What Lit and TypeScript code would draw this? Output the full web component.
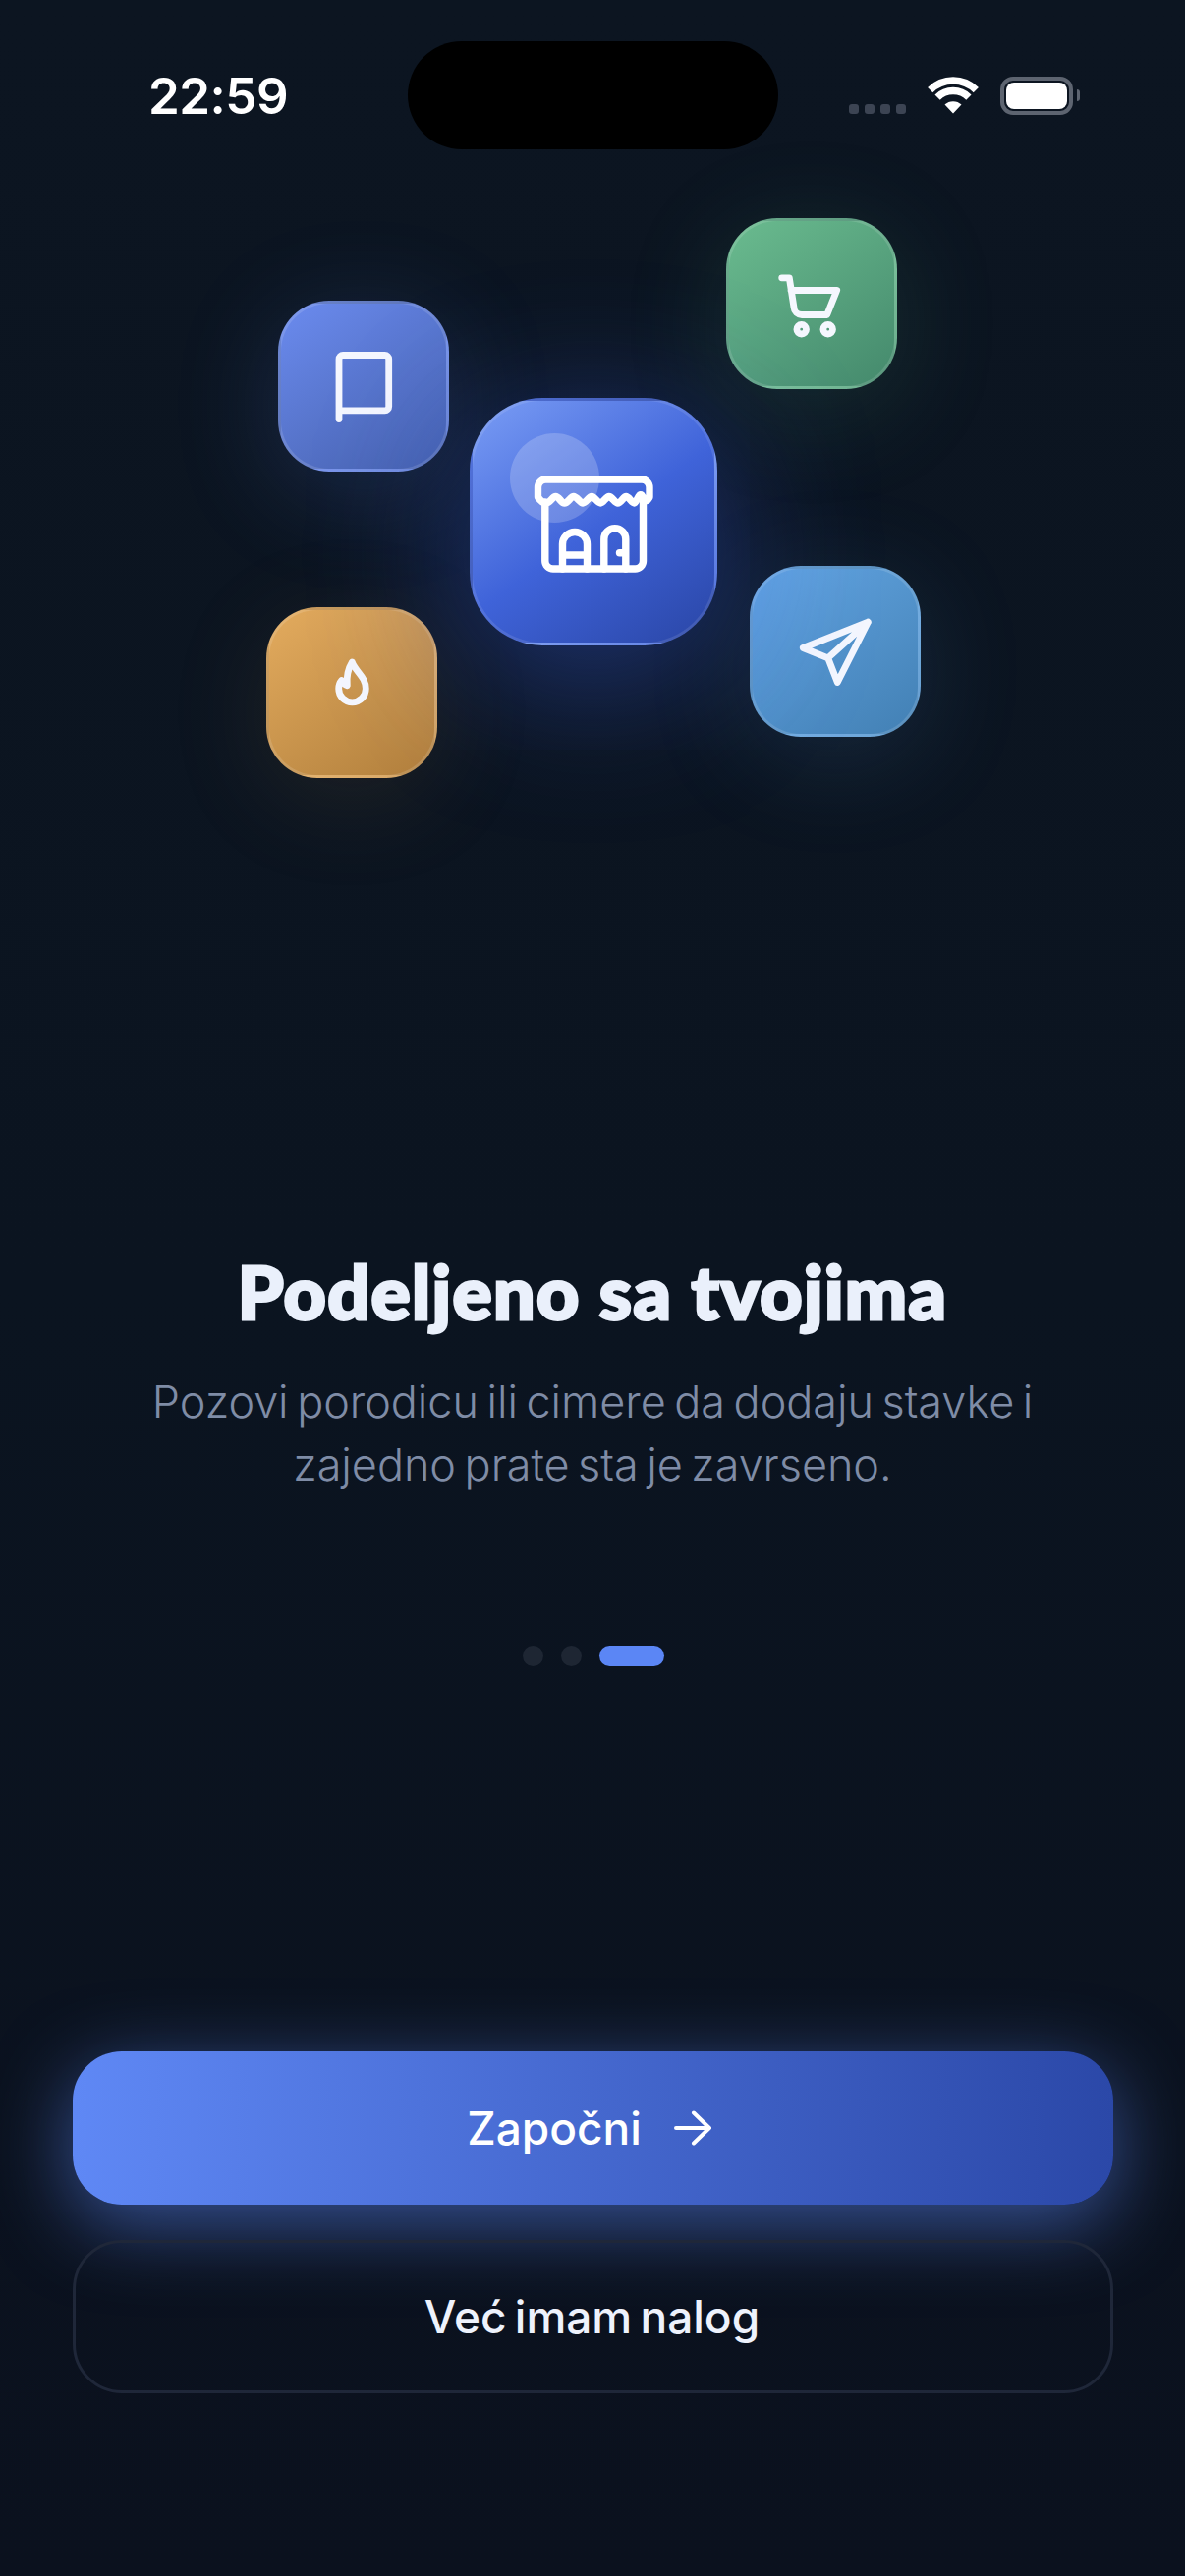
import { LitElement, html, css } from 'lit';
import { customElement } from 'lit/decorators.js';

@customElement('app-root')
export class AppRoot extends LitElement {
  static styles = css`
    :host {
      display: flex;
      flex-direction: column;
      width: 1206px;
      height: 100vh;
      overflow: hidden;
      background: linear-gradient(180deg, #0c1521 0%, #0b1420 50%, #0b111e 100%);
      font-family: Inter, 'Noto Sans', sans-serif;
    }

    .status {
      display: grid;
      grid-template-columns: 1fr 377px 1fr;
      align-items: center;
      height: 110px;
      margin-top: 42px;
      flex: none;
      position: relative;
      z-index: 2;
    }
    .time {
      padding-left: 151px;
      font-size: 51px;
      font-weight: 600;
      letter-spacing: -0.5px;
      line-height: 1;
      color: #fff;
    }
    .island {
      height: 110px;
      background: #000;
      border-radius: 55px;
    }
    .status-right {
      display: flex;
      justify-content: flex-end;
      align-items: center;
      gap: 22px;
      padding-right: 107px;
    }
    .signal {
      display: flex;
      gap: 6px;
      margin-top: 28px;
    }
    .signal i {
      width: 10px;
      height: 10px;
      border-radius: 3px;
      background: #3c4453;
    }
    .battery {
      display: flex;
      align-items: center;
      gap: 4px;
    }
    .battery-body {
      box-sizing: border-box;
      width: 74px;
      height: 39px;
      padding: 2px;
      border: 4px solid #5d6470;
      border-radius: 13px;
    }
    .battery-body div {
      height: 100%;
      background: #fff;
      border-radius: 8px;
    }
    .battery-cap {
      width: 3px;
      height: 12px;
      background: #5d6470;
      border-radius: 0 4px 4px 0;
    }

    .hero {
      position: relative;
      flex: none;
      height: 1116px;
    }
    .tile {
      position: absolute;
      box-sizing: border-box;
      width: 174px;
      height: 174px;
      border-radius: 52px;
      border: 3px solid rgba(255, 255, 255, 0.13);
      display: flex;
      align-items: center;
      justify-content: center;
    }
    .tile svg {
      width: 96px;
      height: 96px;
      fill: none;
      stroke: #f5f7fe;
      stroke-width: 6.8;
      stroke-linecap: round;
      stroke-linejoin: round;
      position: relative;
    }
    .book {
      left: 283px;
      top: 154px;
      background: linear-gradient(145deg, #6b8bef, #4560ab);
      box-shadow: 0 20px 110px rgba(91, 134, 245, 0.2);
    }
    .cart {
      left: 739px;
      top: 70px;
      background: linear-gradient(145deg, #6abb8f, #44896c);
      box-shadow: 0 20px 110px rgba(90, 190, 140, 0.16);
    }
    .plane {
      left: 763px;
      top: 424px;
      background: linear-gradient(145deg, #63a5e2, #4280b4);
      box-shadow: 0 20px 110px rgba(90, 160, 230, 0.16);
    }
    .flame {
      left: 271px;
      top: 466px;
      background: linear-gradient(145deg, #e3ab5e, #b17f3c);
      box-shadow: 0 20px 110px rgba(230, 170, 90, 0.1);
    }
    .main {
      left: 478px;
      top: 253px;
      width: 252px;
      height: 252px;
      border-radius: 74px;
      border-color: rgba(255, 255, 255, 0.1);
      background: linear-gradient(145deg, #7a9df5 0%, #3f63d9 52%, #2a46a6 100%);
      box-shadow: 0 30px 160px rgba(60, 100, 240, 0.46);
    }
    .main svg {
      width: 144px;
      height: 144px;
      stroke-width: 7.4;
      stroke: #fff;
    }
    .shine {
      position: absolute;
      left: 38px;
      top: 33px;
      width: 91px;
      height: 91px;
      border-radius: 50%;
      background: rgba(255, 255, 255, 0.2);
    }

    .copy {
      flex: none;
      text-align: center;
    }
    h1 {
      margin: 0;
      font-family: Lato, Inter, sans-serif;
      font-size: 75px;
      font-weight: 900;
      line-height: 92px;
      letter-spacing: 1.4px;
      -webkit-text-stroke: 3px #eaf0fb;
      color: #eaf0fb;
    }
    p {
      margin: 35px 0 0;
      font-size: 45px;
      font-weight: 300;
      line-height: 63.5px;
      letter-spacing: -0.05px;
      word-spacing: -4px;
      color: #7f8ca6;
    }

    .dots {
      display: flex;
      justify-content: center;
      gap: 18px;
      margin-top: 153px;
      padding-left: 2px;
      flex: none;
    }
    .dots i {
      width: 21px;
      height: 21px;
      border-radius: 11px;
      background: #1e2633;
    }
    .dots i.on {
      width: 66px;
      background: #5b86f5;
    }

    .actions {
      margin-top: auto;
      padding: 0 73px 186px 74px;
      display: flex;
      flex-direction: column;
      gap: 36px;
    }
    button {
      box-sizing: border-box;
      height: 156px;
      border-radius: 50px;
      font-family: inherit;
      font-size: 46px;
      font-weight: 500;
      display: flex;
      align-items: center;
      justify-content: center;
      gap: 32px;
    }
    .primary {
      border: 0;
      padding: 0 7px 0 0;
      color: #fff;
      background: linear-gradient(90deg, #5f88f5, #2b48a8);
      box-shadow: 0 20px 80px rgba(91, 134, 245, 0.55);
    }
    .primary svg {
      width: 40px;
      height: 36px;
      fill: none;
      stroke: #fff;
      stroke-width: 4;
      stroke-linecap: round;
      stroke-linejoin: round;
    }
    .secondary {
      border: 3px solid #1f2739;
      padding: 0 2px 0 0;
      background: transparent;
      color: #eef2fc;
      word-spacing: -4px;
    }
  `;

  render() {
    return html`
      <div class="status">
        <div class="time">22:59</div>
        <div class="island"></div>
        <div class="status-right">
          <div class="signal"><i></i><i></i><i></i><i></i></div>
          <svg width="52" height="38" viewBox="0 0 52 38">
            <path d="M26 37.5 L17.5 28.5 A12.4 12.4 0 0 1 34.5 28.5 Z" fill="#fff" />
            <path d="M2.7 13.7 A33 33 0 0 1 49.3 13.7 M10.1 21.1 A22.5 22.5 0 0 1 41.9 21.1" fill="none" stroke="#fff" stroke-width="7.4" />
          </svg>
          <div class="battery">
            <div class="battery-body"><div></div></div>
            <div class="battery-cap"></div>
          </div>
        </div>
      </div>

      <div class="hero">
        <div class="tile book">
          <svg viewBox="0 0 96 96">
            <path d="M23 81.5 V20.5 a4 4 0 0 1 4-4 H69.7 a4 4 0 0 1 4 4 V68.8 a4 4 0 0 1-4 4 H23" />
          </svg>
        </div>
        <div class="tile cart">
          <svg viewBox="0 0 96 96">
            <path d="M17.7 21.8 H25.3 L30 52 a8 8 0 0 0 8 7.5 H63.7 L73.7 34.5 H27" />
            <circle cx="37.7" cy="74.2" r="4.8" />
            <circle cx="64.7" cy="74.2" r="4.8" />
          </svg>
        </div>
        <div class="tile plane">
          <svg viewBox="0 0 96 96">
            <path d="M81.3 18.2 L15.3 44.5 L40.7 54.8 L50.3 79.5 Z M81.3 18.2 L40.7 54.8" />
          </svg>
        </div>
        <div class="tile flame">
          <svg viewBox="0 0 96 96">
            <path d="M37.7 35.5 C39 38 41 40 43.3 40.7 C42.5 32 44 24 48.3 17 C52 27 62.3 32 62.3 44 A13.8 13.8 0 1 1 34.7 44 C34.7 41 36 37.5 37.7 35.5 Z" />
          </svg>
        </div>
        <div class="tile main">
          <div class="shine"></div>
          <svg viewBox="0 0 144 144">
            <path d="M15.5 47 V37 a8 8 0 0 1 8-8 H121 a8 8 0 0 1 8 8 V47 C127 51 125 53 121.8 46.5 S116 53 113.5 53 S108 46.5 105.2 46.5 S100 53 96.8 53 S91 46.5 87.8 46.5 S82 53 79.2 53 S73 46.5 70.2 46.5 S64 53 61.2 53 S55 46.5 51.8 46.5 S46 53 42.5 53 S37 46.5 33.5 46.5 S28 53 24 53 S18 51 15.5 47 Z" />
            <path d="M22.8 52 V112 a8 8 0 0 0 8 8 H114.5 a8 8 0 0 0 8-8 V52" />
            <path d="M40.5 120 V95 a12.5 12.5 0 0 1 25 0 V120 M40.5 106 H65.5" />
            <path d="M82.8 120 V89.7 a11 11 0 0 1 22 0 V120 M98.5 103.7 h2" />
          </svg>
        </div>
      </div>

      <div class="copy">
        <h1>Podeljeno sa tvojima</h1>
        <p>Pozovi porodicu ili cimere da dodaju stavke i<br />zajedno prate sta je zavrseno.</p>
      </div>

      <div class="dots"><i></i><i></i><i class="on"></i></div>

      <div class="actions">
        <button class="primary">
          Započni
          <svg viewBox="0 0 40 36"><path d="M3 18 H37 M21 2.5 L37 18 L21 33.5" /></svg>
        </button>
        <button class="secondary">Već imam nalog</button>
      </div>
    `;
  }
}
